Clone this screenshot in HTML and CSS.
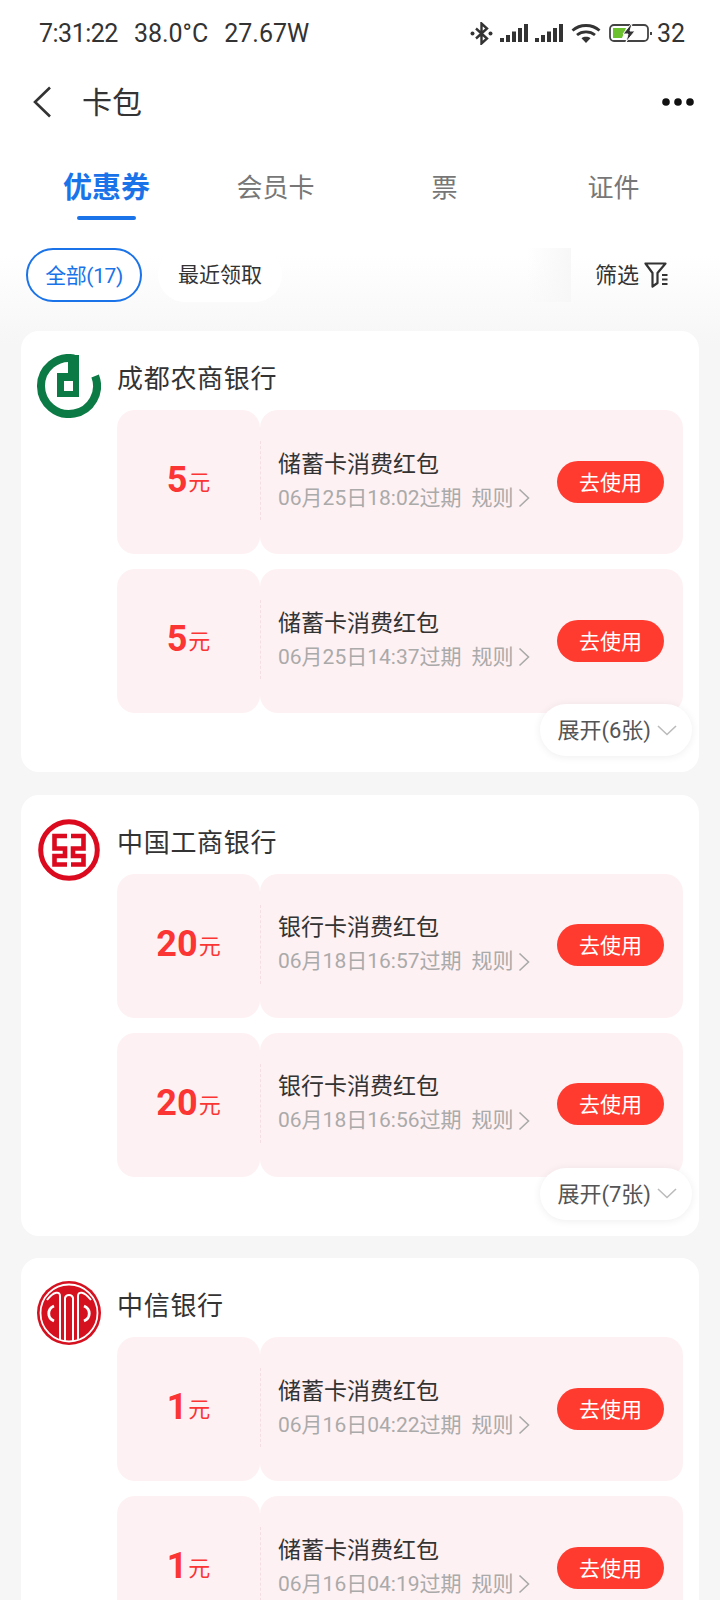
FILE: index.html
```html
<!DOCTYPE html>
<html lang="zh-CN">
<head>
<meta charset="utf-8">
<title>卡包</title>
<link rel="stylesheet" href="styles.css">
</head>
<body>
<div class="page">
  <div class="status">
    <div class="status-left"><span>7:31:22</span><span>38.0°C</span><span>27.67W</span></div>
    <div class="status-right">
      <svg class="i-bt" viewBox="0 0 23 23"><path d="M6 6.500 17 16.500 11.500 21.500V1.500L17 6.500 6 16.500" fill="none" stroke="#333" stroke-width="2.400"/><circle cx="2.500" cy="11.500" r="2" fill="#333"/><circle cx="20.500" cy="11.500" r="2" fill="#333"/></svg>
      <svg class="i-sig" viewBox="0 0 28 18"><path d="M0 14h4v4H0zM6 11h4v7H6zM12 7.500h4V18h-4zM18 4h4v14h-4zM24 0h4v18h-4z" fill="#333"/></svg>
      <svg class="i-sig" viewBox="0 0 28 18"><path d="M0 14h4v4H0zM6 11h4v7H6zM12 7.500h4V18h-4zM18 4h4v14h-4zM24 0h4v18h-4z" fill="#333"/></svg>
      <svg class="i-wifi" viewBox="0 0 30 20"><g fill="none" stroke="#333" stroke-width="2.800"><path d="M1.500 7.500C9 .8 21 .8 28.500 7.500"/><path d="M6 12C11 7.800 19 7.800 24 12"/></g><path d="M10.500 15.200C13 13.300 17 13.300 19.500 15.200L15 20z" fill="#333"/></svg>
      <svg class="i-bat" viewBox="0 0 40 18"><rect x="1" y="1" width="38" height="16" rx="4" fill="none" stroke="#444" stroke-width="1.800"/><path d="M4 4h13l-4 10H4z" fill="#6cc12f"/><path d="M22 0 14 10h5l-2 8 9-11h-5l2-7z" fill="#333" stroke="#fff" stroke-width="1"/></svg>
      <i class="bat-dot"></i>
      <span class="bat-num">32</span>
    </div>
  </div>

  <div class="nav">
    <svg class="i-back" viewBox="0 0 20 32"><path d="M18 1.500 3 16l15 14.500" fill="none" stroke="#333" stroke-width="2.600"/></svg>
    <div class="nav-title">卡包</div>
    <svg class="i-more" viewBox="0 0 32 10"><circle cx="4" cy="5" r="3.800"/><circle cx="16" cy="5" r="3.800"/><circle cx="28" cy="5" r="3.800"/></svg>
  </div>

  <div class="tabs">
    <div class="tab tab-on"><span class="tab-text">优惠券</span><i class="tab-bar"></i></div>
    <div class="tab"><span class="tab-text">会员卡</span></div>
    <div class="tab"><span class="tab-text">票</span></div>
    <div class="tab"><span class="tab-text">证件</span></div>
  </div>

  <div class="filters">
    <div class="pill pill-on">全部(17)</div>
    <div class="pill">最近领取</div>
    <div class="fade"></div>
    <div class="filter-btn"><span class="filter-text">筛选</span>
      <svg class="i-filter" viewBox="0 0 24 26"><path d="M1.500 1.500H21.500L13.500 11V21L8.500 24.500V11Z" fill="none" stroke="#333" stroke-width="2.200" stroke-linejoin="round"/><path d="M18 13h5.500M18 17.500h5.500M18 22h5.500" stroke="#333" stroke-width="1.800"/></svg>
    </div>
  </div>

  <section class="card">
    <svg class="logo" viewBox="0 0 64 64"><path d="M37 4.450A28 28 0 1 0 58.150 22" fill="none" stroke="#0b7a45" stroke-width="8"/><path fill-rule="evenodd" d="M31 1h11v42H20V19h11zM27 27v10h9V27z" fill="#0b7a45"/></svg>
    <div class="body">
      <h2 class="bank">成都农商银行</h2>
      <div class="coupon">
        <div class="amount"><b>5</b><span class="unit">元</span></div>
        <div class="info">
          <div class="text"><div class="c-title">储蓄卡消费红包</div><div class="c-date">06月25日18:02过期<span class="rule">规则<svg class="i-chev" viewBox="0 0 12 20"><path d="M1.500 1.500 10.500 10l-9 8.500" fill="none" stroke="#aaa" stroke-width="1.600"/></svg></span></div></div>
          <div class="use">去使用</div>
        </div>
      </div>
      <div class="coupon">
        <div class="amount"><b>5</b><span class="unit">元</span></div>
        <div class="info">
          <div class="text"><div class="c-title">储蓄卡消费红包</div><div class="c-date">06月25日14:37过期<span class="rule">规则<svg class="i-chev" viewBox="0 0 12 20"><path d="M1.500 1.500 10.500 10l-9 8.500" fill="none" stroke="#aaa" stroke-width="1.600"/></svg></span></div></div>
          <div class="use">去使用</div>
        </div>
      </div>
    </div>
    <div class="expand"><span class="expand-text">展开(6张)</span><svg class="i-down" viewBox="0 0 20 11"><path d="M1 1l9 8.500L19 1" fill="none" stroke="#bbb" stroke-width="1.600"/></svg></div>
  </section>

  <section class="card">
    <svg class="logo" viewBox="0 0 64 64"><circle cx="32" cy="32" r="28.300" fill="#fff" stroke="#dc0a1e" stroke-width="5"/><g fill="none" stroke="#dc0a1e" stroke-width="4.600"><path d="M30 18H17.500V30.500H28V38H17.500V46.500H30"/><path d="M34 18H46.500V30.500H36V38H46.500V46.500H34"/></g></svg>
    <div class="body">
      <h2 class="bank">中国工商银行</h2>
      <div class="coupon">
        <div class="amount"><b>20</b><span class="unit">元</span></div>
        <div class="info">
          <div class="text"><div class="c-title">银行卡消费红包</div><div class="c-date">06月18日16:57过期<span class="rule">规则<svg class="i-chev" viewBox="0 0 12 20"><path d="M1.500 1.500 10.500 10l-9 8.500" fill="none" stroke="#aaa" stroke-width="1.600"/></svg></span></div></div>
          <div class="use">去使用</div>
        </div>
      </div>
      <div class="coupon">
        <div class="amount"><b>20</b><span class="unit">元</span></div>
        <div class="info">
          <div class="text"><div class="c-title">银行卡消费红包</div><div class="c-date">06月18日16:56过期<span class="rule">规则<svg class="i-chev" viewBox="0 0 12 20"><path d="M1.500 1.500 10.500 10l-9 8.500" fill="none" stroke="#aaa" stroke-width="1.600"/></svg></span></div></div>
          <div class="use">去使用</div>
        </div>
      </div>
    </div>
    <div class="expand"><span class="expand-text">展开(7张)</span><svg class="i-down" viewBox="0 0 20 11"><path d="M1 1l9 8.500L19 1" fill="none" stroke="#bbb" stroke-width="1.600"/></svg></div>
  </section>

  <section class="card">
    <svg class="logo" viewBox="0 0 64 64"><circle cx="32" cy="32" r="32" fill="#d5101f"/><circle cx="32" cy="32" r="28.500" fill="none" stroke="#fff" stroke-width="1.800"/><g fill="none" stroke="#fff" stroke-width="2"><path d="M23 59V15C23 10 17 10 10 19"/><path d="M41 59V15C41 10 47 10 54 19"/><path d="M28 60V17C29 13 35 13 36 17V60"/></g><g fill="none" stroke="#fff" stroke-width="2.800"><path d="M17 25C10 28 10 37 17 40"/><path d="M47 25C54 28 54 37 47 40"/></g></svg>
    <div class="body">
      <h2 class="bank">中信银行</h2>
      <div class="coupon">
        <div class="amount"><b>1</b><span class="unit">元</span></div>
        <div class="info">
          <div class="text"><div class="c-title">储蓄卡消费红包</div><div class="c-date">06月16日04:22过期<span class="rule">规则<svg class="i-chev" viewBox="0 0 12 20"><path d="M1.500 1.500 10.500 10l-9 8.500" fill="none" stroke="#aaa" stroke-width="1.600"/></svg></span></div></div>
          <div class="use">去使用</div>
        </div>
      </div>
      <div class="coupon">
        <div class="amount"><b>1</b><span class="unit">元</span></div>
        <div class="info">
          <div class="text"><div class="c-title">储蓄卡消费红包</div><div class="c-date">06月16日04:19过期<span class="rule">规则<svg class="i-chev" viewBox="0 0 12 20"><path d="M1.500 1.500 10.500 10l-9 8.500" fill="none" stroke="#aaa" stroke-width="1.600"/></svg></span></div></div>
          <div class="use">去使用</div>
        </div>
      </div>
    </div>
  </section>
</div>
</body>
</html>
```
FILE: styles.css
```css
* { box-sizing: border-box; }
html, body { margin: 0; padding: 0; height: 1600px; overflow: hidden; }
body {
  background: linear-gradient(#fff 255px, #f6f6f6 345px);
  font-family: Roboto, "Noto Sans CJK SC", sans-serif;
  color: #333;
}
.page { width: 720px; height: 1600px; overflow: hidden; }
svg { display: block; flex: none; }

.status { height: 66px; display: flex; align-items: center; justify-content: space-between; padding: 0 35px 0 39px; }
.status-left { display: flex; gap: 16px; font-size: 25px; color: #333; }
.status-left span:first-child { letter-spacing: -.5px; }
.status-right { display: flex; align-items: center; }
.i-bt { width: 23px; height: 23px; margin-right: 7px; }
.i-sig { width: 28px; height: 18px; margin-right: 7px; }
.i-wifi { width: 30px; height: 20px; margin-left: 1px; margin-right: 8px; }
.i-bat { width: 40px; height: 18px; }
.bat-dot { width: 2px; height: 3px; margin: 0 5px 0 1px; background: #444; }
.bat-num { font-size: 25px; }

.nav { height: 72px; display: flex; align-items: center; padding: 0 26px 0 32px; }
.i-back { width: 20px; height: 32px; }
.nav-title { font-size: 30px; margin-left: 30px; padding-bottom: 4px; flex: 1; }
.i-more { width: 32px; height: 10px; fill: #111; }

.tabs { display: grid; grid-template-columns: repeat(4, 169px); padding: 0 22px; height: 84px; }
.tab { display: flex; flex-direction: column; align-items: center; padding-top: 30px; font-size: 26px; color: #777; }
.tab-text { display: block; height: 38px; line-height: 40px; }
.tab-on { font-size: 29px; font-weight: 700; color: #1a73e8; }
.tab-bar { display: block; width: 59px; height: 4px; margin-top: 10px; border-radius: 2px; background: #1a73e8; }

.filters { display: flex; align-items: center; height: 54px; margin-top: 26px; padding: 0 52px 0 26px; gap: 16px; }
.pill { height: 54px; border-radius: 27px; padding: 0 20px 4px; display: flex; align-items: center; font-size: 21px; background: #fff; color: #333; }
.pill-on { border: 2px solid #1a73e8; color: #1a73e8; width: 116px; justify-content: center; padding: 0 0 2px; letter-spacing: -.4px; background: #fff; }
.fade { margin-left: auto; width: 44px; height: 54px; background: linear-gradient(90deg, rgba(246,246,246,0), #f7f7f7); margin-right: 8px; }
.filter-btn { display: flex; align-items: center; gap: 5px; font-size: 22px; color: #333; }
.filter-text { padding-bottom: 4px; }
.i-filter { width: 24px; height: 26px; }

.card {
  position: relative;
  display: flex;
  gap: 16px;
  width: 678px;
  height: 441px;
  margin: 0 0 22.5px 21px;
  padding: 23px 16px 0;
  border-radius: 18px;
  background: #fff;
}
.filters + .card { margin-top: 29px; }
.logo { width: 64px; height: 64px; }
.body { flex: 1; min-width: 0; }
.bank { margin: 0 0 8px; padding-top: 1px; height: 48px; font-size: 26px; font-weight: 400; line-height: 48px; letter-spacing: .7px; color: #333; }
.coupon { display: flex; height: 144px; margin-bottom: 15px; }
.amount {
  width: 143px;
  display: flex;
  align-items: baseline;
  justify-content: center;
  padding-top: 46px;
  border-radius: 18px;
  background: #fef1f3;
  color: #fa3534;
  font-size: 22px;
}
.amount b { font-size: 36px; line-height: 48px; font-weight: 700; margin-right: 1px; }
.unit { transform: translateY(-2px); }
.info {
  position: relative;
  flex: 1;
  display: flex;
  align-items: center;
  justify-content: space-between;
  padding: 0 19px 0 18px;
  border-radius: 18px;
  background: #fef1f3;
}
.info::before {
  content: "";
  position: absolute;
  left: 0;
  top: 31px;
  height: 79px;
  border-left: 1px dashed #f3dfe3;
}
.text { padding-bottom: 3px; }
.c-title { font-size: 23px; line-height: 35px; color: #333; }
.c-date { display: flex; align-items: center; font-size: 21px; line-height: 33px; color: #aaa; }
.rule { display: flex; align-items: center; margin-left: 10px; }
.i-chev { width: 12px; height: 20px; margin-left: 4px; }
.use { width: 107px; height: 42px; margin-bottom: 1px; padding-bottom: 2px; border-radius: 21px; background: #ff3b30; color: #fff; font-size: 21px; display: flex; align-items: center; justify-content: center; }

.expand {
  position: absolute;
  right: 7px;
  bottom: 16px;
  height: 52px;
  padding: 0 15px 0 17px;
  display: flex;
  align-items: center;
  gap: 6px;
  border-radius: 26px;
  background: #fff;
  box-shadow: 0 1px 8px rgba(0,0,0,.07);
  font-size: 22px;
  color: #555;
}
.expand-text { padding-bottom: 4px; }
.i-down { width: 20px; height: 11px; }
```
